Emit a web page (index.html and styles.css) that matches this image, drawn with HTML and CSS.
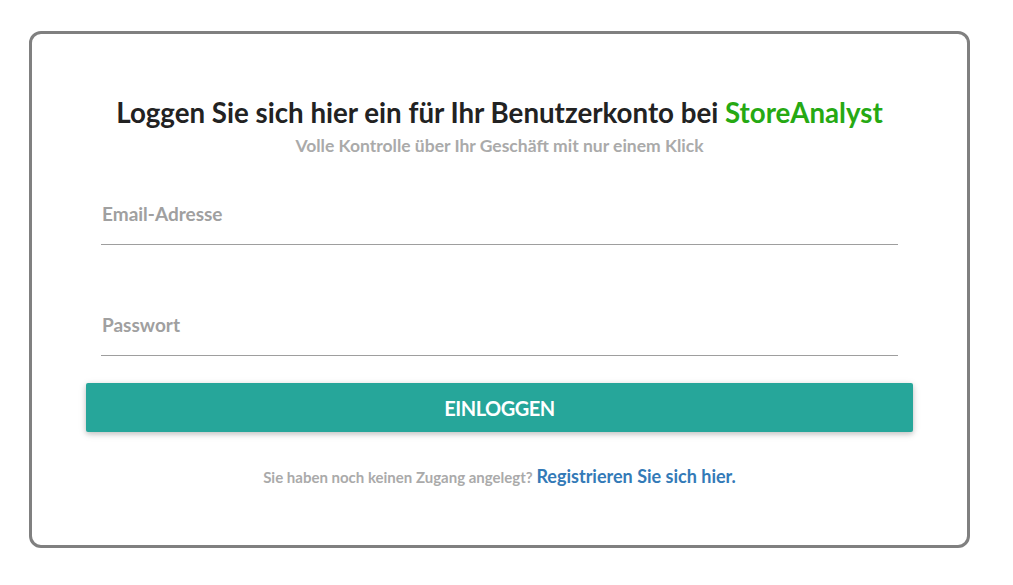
FILE: index.html
```html
<!DOCTYPE html>
<html lang="de">
<head>
<meta charset="utf-8">
<title>Login</title>
<link rel="stylesheet" href="styles.css">
</head>
<body>
<div class="card">
  <h1 class="title">Loggen Sie sich hier ein für Ihr Benutzerkonto bei <span class="brand">StoreAnalyst</span></h1>
  <p class="subtitle">Volle Kontrolle über Ihr Geschäft mit nur einem Klick</p>
  <form class="form">
    <div class="field"><input class="input" type="email" placeholder="Email-Adresse"></div>
    <div class="field"><input class="input" type="password" placeholder="Passwort"></div>
    <button class="btn" type="button">EINLOGGEN</button>
  </form>
  <p class="footer">Sie haben noch keinen Zugang angelegt? <a class="link" href="#">Registrieren Sie sich hier.</a></p>
</div>
</body>
</html>
```
FILE: styles.css
```css
html, body {
  margin: 0;
  padding: 0;
  background: #fff;
}
body {
  font-family: Lato, "Open Sans", sans-serif;
  padding: 31px 0 0 29px;
}
.card {
  box-sizing: border-box;
  width: 941px;
  height: 517px;
  border: 3px solid #808080;
  border-radius: 12px;
  padding: 62px 54px 0 54px;
}
.title {
  margin: 0;
  text-align: center;
  font-size: 27.7px;
  font-weight: 700;
  line-height: 34px;
  color: #222;
}
.brand {
  color: #26a913;
}
.subtitle {
  margin: 6px 0 0 0;
  text-align: center;
  font-size: 17.5px;
  font-weight: 700;
  line-height: 20px;
  color: #aaa;
}
.form {
  margin-top: 27px;
}
.field {
  padding: 0 15px;
}
.field + .field {
  margin-top: 49px;
}
.input {
  display: block;
  box-sizing: border-box;
  width: 100%;
  height: 62px;
  border: none;
  border-bottom: 1px solid #9e9e9e;
  outline: none;
  padding: 0 1px;
  font-family: Lato, sans-serif;
  font-size: 19px;
  font-weight: 700;
  color: #444;
  background: transparent;
}
.input::placeholder {
  color: #a0a0a0;
}
.btn {
  display: block;
  width: 100%;
  height: 49px;
  margin-top: 27px;
  border: none;
  border-radius: 2px;
  background: #26a69a;
  color: #fff;
  font-family: Lato, sans-serif;
  font-size: 20px;
  font-weight: 700;
  letter-spacing: -0.5px;
  box-shadow: 0 2px 5px rgba(0,0,0,0.16), 0 2px 8px rgba(0,0,0,0.12);
}
.footer {
  margin: 33px 0 0 0;
  text-align: center;
  font-size: 15px;
  font-weight: 700;
  color: #aaa;
}
.link {
  color: #337ab7;
  font-size: 18px;
  text-decoration: none;
}
```
